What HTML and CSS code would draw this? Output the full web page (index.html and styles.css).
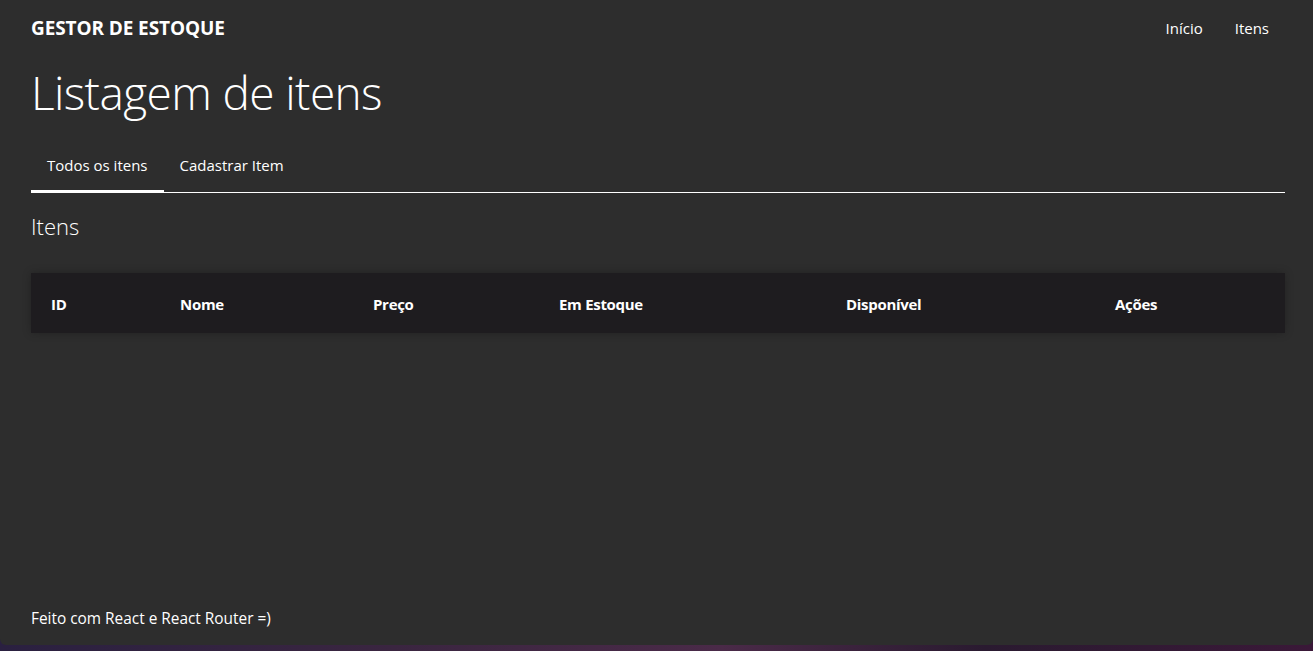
FILE: index.html
```html
<!DOCTYPE html>
<html lang="pt-BR">
<head>
<meta charset="utf-8">
<title>Gestor de Estoque</title>
<link rel="stylesheet" href="styles.css">
</head>
<body>
<div class="window">
  <header class="topbar">
    <div class="brand">GESTOR DE ESTOQUE</div>
    <nav class="nav">
      <a class="nav-link" href="#">Início</a>
      <a class="nav-link" href="#">Itens</a>
    </nav>
  </header>
  <main class="main">
    <h1 class="title">Listagem de itens</h1>
    <div class="tabs">
      <a class="tab tab-active" href="#">Todos os itens</a>
      <a class="tab" href="#">Cadastrar Item</a>
    </div>
    <h2 class="subtitle">Itens</h2>
    <table class="table">
      <thead>
        <tr>
          <th class="col-id">ID</th>
          <th class="col-name">Nome</th>
          <th class="col-price">Preço</th>
          <th class="col-stock">Em Estoque</th>
          <th class="col-avail">Disponível</th>
          <th class="col-actions">Ações</th>
        </tr>
      </thead>
      <tbody></tbody>
    </table>
  </main>
  <footer class="footer">Feito com React e React Router =)</footer>
</div>
</body>
</html>
```

FILE: styles.css
```css
* { box-sizing: border-box; }
html, body { margin: 0; padding: 0; }
body {
  height: 651px;
  overflow: hidden;
  background: linear-gradient(90deg, #2a2040 0%, #3a2540 30%, #4a2a48 55%, #2a1a30 75%, #3a1838 100%);
  font-family: "Segoe UI", "Open Sans", sans-serif;
  color: #ffffff;
}
.window {
  height: 645px;
  background: #2d2d2d;
  border-radius: 0 0 6px 6px;
  display: flex;
  flex-direction: column;
  padding: 0 28px 0 31px;
}
.topbar {
  display: flex;
  justify-content: space-between;
  align-items: center;
  height: 56px;
}
.brand {
  font-size: 19px;
  font-weight: 700;
  letter-spacing: -0.1px;
}
.nav { display: flex; }
.nav-link {
  color: #ffffff;
  text-decoration: none;
  font-size: 15px;
  padding: 0 16px;
}
.main { flex: 1; }
.title {
  margin: 0 0 14px;
  font-size: 46px;
  font-weight: 300;
  line-height: 73px;
  letter-spacing: -0.6px;
}
.tabs {
  display: flex;
  border-bottom: 1px solid #ffffff;
}
.tab {
  color: #ffffff;
  text-decoration: none;
  font-size: 15px;
  padding: 11px 16px 14px;
  line-height: 22px;
  margin-bottom: -1px;
  border-bottom: 3px solid transparent;
}
.tab-active { border-bottom-color: #ffffff; }
.subtitle {
  margin: 0;
  padding-top: 18px;
  font-size: 22px;
  font-weight: 300;
  line-height: 30px;
}
.table {
  margin-top: 32px;
  width: 100%;
  border-collapse: collapse;
  box-shadow: 0 0 8px rgba(0,0,0,0.25);
}
.table th {
  background: #1e1c1f;
  height: 60px;
  text-align: left;
  font-size: 15px;
  font-weight: 700;
  padding: 2px 20px 0;
  letter-spacing: -0.3px;
}
.col-id { width: 129px; }
.col-name { width: 193px; }
.col-price { width: 186px; }
.col-stock { width: 287px; }
.col-avail { width: 269px; }
.footer {
  height: 54px;
  font-size: 15.4px;
  padding-top: 17px;
}
```
